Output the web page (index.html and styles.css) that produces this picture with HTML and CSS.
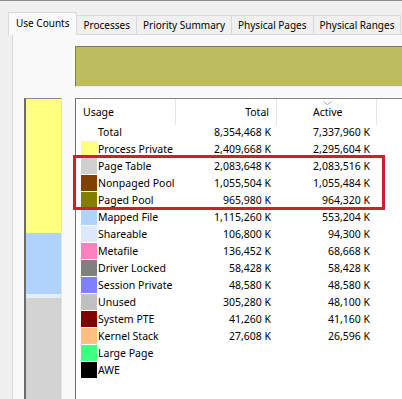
FILE: index.html
```html
<!DOCTYPE html>
<html lang="en">
<head>
    <meta charset="UTF-8">
    <title>RamMap - Use Counts</title>
    <link rel="stylesheet" href="styles.css">
</head>
<body>
<div class="window">
    <div class="tabs">
        <div class="tab active">Use Counts</div>
        <div class="tab">Processes</div>
        <div class="tab">Priority Summary</div>
        <div class="tab">Physical Pages</div>
        <div class="tab">Physical Ranges</div>
    </div>

    <div class="panel">
        <div class="summary-bar"></div>

        <div class="content">
            <div class="usage-bar">
                <div class="seg seg-private"></div>
                <div class="seg seg-mapped"></div>
                <div class="seg seg-share"></div>
                <div class="seg seg-unused"></div>
            </div>

            <div class="list">
                <div class="list-head">
                    <div class="col-usage">Usage</div>
                    <div class="col-num">Total</div>
                    <div class="col-active">
                        <svg class="sort" width="9" height="4" viewBox="0 0 9 4"><polyline points="0.5,0.5 4.5,3.5 8.5,0.5" fill="none" stroke="#a8a8a8" stroke-width="1"/></svg>
                        Active
                    </div>
                    <div></div>
                </div>

                <div class="rows">
                    <div class="row"><div class="name"><span class="swatch"></span>Total</div><div class="num">8,354,468 K</div><div class="num">7,337,960 K</div></div>
                    <div class="row"><div class="name"><span class="swatch c-private"></span>Process Private</div><div class="num">2,409,668 K</div><div class="num">2,295,604 K</div></div>
                    <div class="row"><div class="name"><span class="swatch c-pagetable"></span>Page Table</div><div class="num">2,083,648 K</div><div class="num">2,083,516 K</div></div>
                    <div class="row"><div class="name"><span class="swatch c-nonpaged"></span>Nonpaged Pool</div><div class="num">1,055,504 K</div><div class="num">1,055,484 K</div></div>
                    <div class="row"><div class="name"><span class="swatch c-paged"></span>Paged Pool</div><div class="num">965,980 K</div><div class="num">964,320 K</div></div>
                    <div class="row"><div class="name"><span class="swatch c-mapped"></span>Mapped File</div><div class="num">1,115,260 K</div><div class="num">553,204 K</div></div>
                    <div class="row"><div class="name"><span class="swatch c-share"></span>Shareable</div><div class="num">106,800 K</div><div class="num">94,300 K</div></div>
                    <div class="row"><div class="name"><span class="swatch c-meta"></span>Metafile</div><div class="num">136,452 K</div><div class="num">68,668 K</div></div>
                    <div class="row"><div class="name"><span class="swatch c-driver"></span>Driver Locked</div><div class="num">58,428 K</div><div class="num">58,428 K</div></div>
                    <div class="row"><div class="name"><span class="swatch c-session"></span>Session Private</div><div class="num">48,580 K</div><div class="num">48,580 K</div></div>
                    <div class="row"><div class="name"><span class="swatch c-unused"></span>Unused</div><div class="num">305,280 K</div><div class="num">48,100 K</div></div>
                    <div class="row"><div class="name"><span class="swatch c-pte"></span>System PTE</div><div class="num">41,260 K</div><div class="num">41,160 K</div></div>
                    <div class="row"><div class="name"><span class="swatch c-kstack"></span>Kernel Stack</div><div class="num">27,608 K</div><div class="num">26,596 K</div></div>
                    <div class="row"><div class="name"><span class="swatch c-large"></span>Large Page</div><div class="num"></div><div class="num"></div></div>
                    <div class="row"><div class="name"><span class="swatch c-awe"></span>AWE</div><div class="num"></div><div class="num"></div></div>
                </div>

                <div class="highlight"></div>
            </div>
        </div>
    </div>
</div>
</body>
</html>
```

FILE: styles.css
```css
html, body {
    margin: 0;
    overflow: hidden;
}
body {
    background: #f0f0f0;
    font-family: "Noto Sans", "Open Sans", sans-serif;
    font-size: 10.5px;
    color: #000;
}
.window {
    border-top: 1px solid #8c8c8c;
    height: 398px;
    width: 440px;
}
.tabs {
    display: flex;
    align-items: flex-end;
    margin-top: 11px;
    padding-left: 8px;
    height: 22px;
    font-size: 10px;
}
.tab {
    height: 18px;
    line-height: 19px;
    padding: 0 6px;
    background: #f0f0f0;
    border: 1px solid #d9d9d9;
    border-bottom: none;
    border-left: none;
    white-space: nowrap;
}
.tab.active {
    height: 22px;
    line-height: 20px;
    padding: 0 7px;
    background: #f9f9f9;
    border-left: 1px solid #d9d9d9;
    position: relative;
    z-index: 1;
    margin-bottom: -1px;
}
.panel {
    margin-left: 12px;
    background: #f9f9f9;
    border-left: 1px solid #d9d9d9;
    border-top: 1px solid #d9d9d9;
    height: 400px;
}
.summary-bar {
    margin: 11px 0 0 62px;
    height: 39px;
    background: #bdbd5f;
    border-top: 1px solid #7a7a7a;
    border-left: 1px solid #7a7a7a;
    border-bottom: 1px solid #ececec;
}
.content {
    display: flex;
    gap: 13px;
    margin: 11px 0 0 11px;
}
.usage-bar {
    width: 35px;
    height: 320px;
    display: flex;
    flex-direction: column;
    border-top: 1px solid #8a8a8a;
    border-left: 2px solid #6c6c6c;
    border-right: 1px solid #e2e2e2;
}
.seg-private { height: 134px; background: #ffff80; }
.seg-mapped { height: 61px; background: #b0d3fd; }
.seg-share { height: 4px; background: #e4eefb; }
.seg-unused { flex: 1; background: #d3d3d3; }

.list {
    flex: 1;
    position: relative;
    background: #fff;
    border-top: 1px solid #828282;
    border-left: 1px solid #6e6e6e;
    height: 320px;
}
.list-head, .row {
    display: grid;
    grid-template-columns: 100px 101px 100px 1fr;
}
.list-head {
    height: 22px;
    line-height: 26px;
}
.list-head > div {
    border-right: 1px solid #e5e5e5;
    position: relative;
}
.col-usage {
    padding-left: 7px;
}
.col-num {
    text-align: right;
    padding-right: 7px;
}
.col-active {
    padding-left: 36px;
}
.sort {
    position: absolute;
    left: 46px;
    top: 2px;
}
.rows {
    padding-top: 3px;
}
.row {
    height: 17px;
    line-height: 17px;
}
.name {
    display: flex;
    align-items: flex-start;
    padding-left: 5px;
    white-space: nowrap;
}
.swatch {
    width: 16px;
    height: 16px;
    margin-right: 1px;
    flex: none;
}
.num {
    text-align: right;
    padding-right: 6px;
    white-space: nowrap;
}
.row .num:nth-child(3) {
    padding-right: 7px;
}
.c-private { background: #ffff80; }
.c-pagetable { background: #d0d0d0; }
.c-nonpaged { background: #804000; }
.c-paged { background: #808000; }
.c-mapped { background: #b0d3fd; }
.c-share { background: #dde9fb; }
.c-meta { background: #ff80c0; }
.c-driver { background: #808080; }
.c-session { background: #8080ff; }
.c-unused { background: #c0c0c0; }
.c-pte { background: #800000; }
.c-kstack { background: #ffc080; }
.c-large { background: #40ff80; }
.c-awe { background: #000; }

.highlight {
    position: absolute;
    left: -3px;
    top: 56px;
    width: 306px;
    height: 49px;
    border: 3px solid #cc2030;
}
```
